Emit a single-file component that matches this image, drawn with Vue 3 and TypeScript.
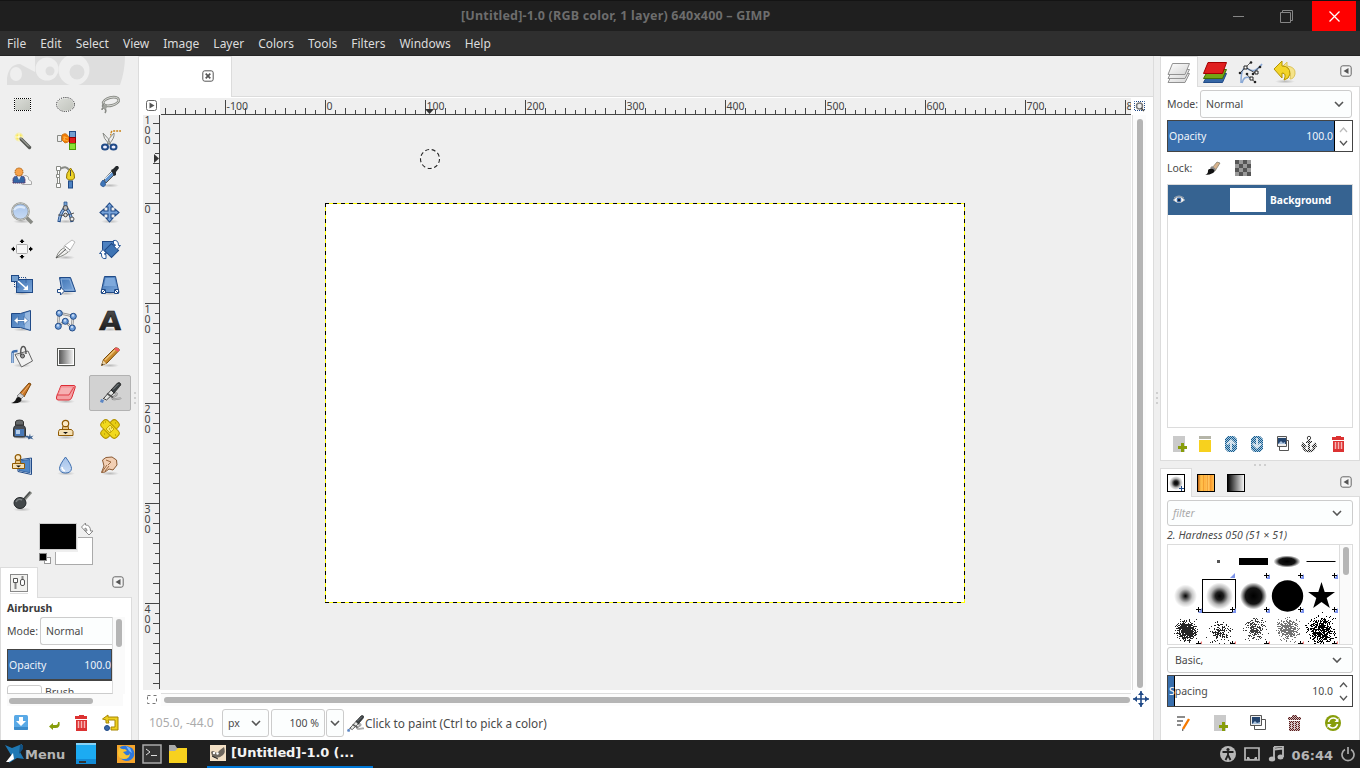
<script setup lang="ts">
const menus = ['File', 'Edit', 'Select', 'View', 'Image', 'Layer', 'Colors', 'Tools', 'Filters', 'Windows', 'Help']

interface Tool { name: string; art: string }

const shadow = '<ellipse cx="12" cy="20.5" rx="9" ry="2" fill="url(#shade)"/>'

const airbrush =
  '<path d="M13 12c5-1 8 1 4 3s-3 4 1 3 4 0 5-1" fill="none" stroke="#8d8d8d" stroke-width="2"/><path d="M13 12c5-1 8 1 4 3s-3 4 1 3 4 0 5-1" fill="none" stroke="#ddd" stroke-width=".6"/>' +
  '<path d="M5.500 17.500L14 8l3 3-8.500 8z" fill="#e4e6e4" stroke="#444" /><path d="M9 12.500l6 4" stroke="#555" stroke-width="1.800"/>' +
  '<path d="M13 9l6.500-7q2-1 3 .5t-1 3L16 12z" fill="#3a4043" stroke="#222" stroke-width=".8"/><path d="M15 8.500L20.500 3" stroke="#8a9093" stroke-width=".9"/>' +
  '<path d="M7 16l-2 2" stroke="#444"/><path d="M2 21l1-3 3 1-1 3z" fill="#5b86c4"/>'

const tools: Tool[] = [
  { name: 'rect-select', art: '<rect x="4.500" y="5.500" width="16" height="12" fill="url(#silver)" stroke="#fff"/><rect x="4.500" y="5.500" width="16" height="12" fill="none" stroke="#000" stroke-dasharray="1 1" stroke-dashoffset=".5"/>' },
  { name: 'ellipse-select', art: '<ellipse cx="11.500" cy="11.500" rx="9" ry="7" fill="url(#silver)" stroke="#fff" stroke-width="1.300"/><ellipse cx="11.500" cy="11.500" rx="9" ry="7" fill="none" stroke="#222" stroke-dasharray="1.200 1"/>' },
  { name: 'lasso', art: '<g fill="none"><ellipse cx="13" cy="8.500" rx="8" ry="4" transform="rotate(-14 13 8.500)" stroke="#888a85" stroke-width="2.600"/><ellipse cx="13" cy="8.500" rx="8" ry="4" transform="rotate(-14 13 8.500)" stroke="#d8dad5" stroke-width=".9"/><path d="M6 11q-3 2 0 4t1 5M9 13q-5 1-5 4" stroke="#888a85" stroke-width="1.600"/></g><circle cx="7" cy="14" r="2" fill="#a0a29d"/>' },
  { name: 'fuzzy-select', art: '<circle cx="9" cy="8" r="5" fill="url(#glow)"/><path d="M10.500 9.500l9 9" stroke="#555753" stroke-width="3.400" stroke-linecap="round"/><path d="M10.500 9l8.500 8.500" stroke="#c2c6bd" stroke-width="1"/><path d="M9 4v8M5 8h8" stroke="#fffbd0"/>' },
  { name: 'color-select', art: '<path d="M3.500 6.500h4v6h-4z" fill="#eee" stroke="#888a85"/><path d="M8 6q4-3 6 1l2 3-2 3-3 1-3-3z" fill="#f57900" stroke="#ce7b1c"/><path d="M9 8l5 1m-5 1l5 2m-3-5l-1 5" stroke="#fcaf3e"/><rect x="15.500" y="2.500" width="6" height="6" fill="#729fcf" stroke="#204a87"/><rect x="15.500" y="8.500" width="6" height="6" fill="#e01b1b" stroke="#8f0000"/><rect x="15.500" y="14.500" width="6" height="6" fill="#8ae234" stroke="#4e9a06"/>' },
  { name: 'scissors', art: '<path d="M13 10q-1-8 2-8h8" fill="none" stroke="#c98012" stroke-width="1.300" stroke-dasharray="2 1"/><path d="M5 4q0 5 6 11l2 1Q11 9 5 4zM16 4q1 5-5 11l-2 1Q10 9 16 4z" fill="#eee" stroke="#888a85"/><g fill="#eef" stroke="#204a87" stroke-width="2"><ellipse cx="7" cy="18" rx="3" ry="2.500"/><ellipse cx="15.500" cy="18" rx="3" ry="2.500"/></g>' },
  { name: 'foreground-select', art: '<path d="M12 19.500v-6q1-3.500 4-3 3.500 1 2.500 4l3 2v3h-9z" fill="#f6f6f6" stroke="#aaa"/><path d="M3 18v-4q1-3 4-3h4q4 0 4 4v3z" fill="#3465a4" stroke="#5c3566" stroke-dasharray="1.500 .6"/><path d="M7 11l2 4 2-4z" fill="#e8eef8"/><circle cx="9" cy="7" r="4" fill="#f7a24a" stroke="#a85a08" stroke-dasharray="1.500 .7"/>' },
  { name: 'paths', art: '<g fill="none" stroke="#888a85"><path d="M4.500 5v13" stroke-width="3"/><path d="M6 4q6-4 9 1" stroke-width="2"/></g><path d="M4.500 5v13" stroke="#fff"/><g fill="#fff" stroke="#888a85"><path d="M2.500 1.500h4v4h-4zM2.500 18.500h4v4h-4zM2.500 9.500h3v3h-3z"/></g><path d="M16.500 3q-5 6-4 10l2 2h4l2-2q1-4-4-10z" fill="#edd42a" stroke="#8f7200"/><path d="M16.500 5v6" stroke="#444"/><rect x="14.500" y="16" width="4" height="7" fill="#4f83c2" stroke="#204a87"/>' },
  { name: 'color-picker', art: shadow + '<path d="M6 15l8-9 3 3-9 9z" fill="#5f93cf" stroke="#555753"/><path d="M7 14l8-8" stroke="#d7e5f5"/><path d="M13 5l2-1 3-3h2l1 2-3 4v3l-2 1z" fill="#24282b"/><path d="M5 15q-4 4-1.500 6t4-1Q8 17 5 15z" fill="#3f76b8" stroke="#204a87" stroke-width=".7"/>' },
  { name: 'zoom', art: shadow + '<path d="M16 16l6 6" stroke="#888a85" stroke-width="3.500"/><circle cx="10.500" cy="10.500" r="8.300" fill="url(#lens)" stroke="#8b8d89" stroke-width="2"/><circle cx="10.500" cy="10.500" r="8.300" fill="none" stroke="#d3d5d1" stroke-width=".8"/><path d="M4 9q3-5 11-2" stroke="#dce9fa" stroke-width="2" fill="none"/>' },
  { name: 'measure', art: shadow + '<g fill="none"><path d="M10 8q-4 5-5 13M13 8q4 5 5 13" stroke="#204a87" stroke-width="3.200"/><path d="M10 8q-4 5-5 12M13 8q4 5 5 12" stroke="#8db2df" stroke-width="1.500"/><path d="M4 14q8 2 16-2" stroke="#555"/></g><path d="M10 1h3v4h-3z" fill="#729fcf" stroke="#204a87" stroke-width=".7"/><circle cx="11.500" cy="7" r="2.400" fill="#bbb" stroke="#444"/><circle cx="11.500" cy="14" r="1.800" fill="#ddd" stroke="#444"/><circle cx="18" cy="18" r="2" fill="#eee" stroke="#555"/>' },
  { name: 'move', art: shadow + '<path d="M11.500 2l3.500 4h-2v4h4V8l4 3.500-4 3.500v-2h-4v4h2l-3.500 4L8 17h2v-4H6v2l-4-3.500L6 8v2h4V6H8z" fill="#78a4db" stroke="#204a87" stroke-width="1.100"/>' },
  { name: 'align', art: '<rect x="6.500" y="7.500" width="11" height="9" rx="1" fill="#f5f5f5" stroke="#a8a8a8"/><path d="M12 2l2.500 3H13v1h-2V5H9.500zM12 22l2.500-3H13v-1h-2v1H9.500zM1 12l3-2.500V11h1v2H4v1.500zM23 12l-3-2.500V11h-1v2h1v1.500z" fill="#000"/>' },
  { name: 'crop', art: shadow + '<path d="M2 21q3-9 10-11l3 4q-3 4-13 7z" fill="#f1f1ef" stroke="#888a85"/><path d="M10 9l8-6 3 2-6 10-4-2z" fill="#fff" stroke="#bbb"/><path d="M2 21l10-9" stroke="#555"/><path d="M11 9l5 4" stroke="#888"/>' },
  { name: 'rotate', art: '<rect x="4.500" y="4.500" width="11" height="10" fill="#4d81c0" stroke="#204a87"/><rect x="8.500" y="8.500" width="10" height="10" transform="rotate(45 13.500 13.500)" fill="#3e74b4" stroke="#204a87"/><g fill="#fff" stroke="#2b5a9a" stroke-width="1"><path d="M15.500 3.500q5-1 5 5h2l-3.500 4-3.500-4h2q0-2-2-1z"/><path d="M8 21.500q-5 1-4.500-5h-2L5 12.500l3.500 4h-2q0 2 1.500 1z"/></g>' },
  { name: 'scale', art: shadow + '<rect x="6.500" y="6.500" width="16" height="13" fill="url(#blue)" stroke="#204a87"/><rect x="1.500" y="2.500" width="7" height="6" fill="#729fcf" stroke="#204a87"/><path d="M4.500 9v5h5M9 4.500h7V10" fill="none" stroke="#204a87" stroke-dasharray="1 1"/><path d="M8 8l9 8" stroke="#fff" stroke-width="1.600"/><path d="M13 17h5v-5z" fill="#fff"/>' },
  { name: 'shear', art: shadow + '<path d="M5.500 4.500h11l5 14H8z" fill="url(#blue)" stroke="#204a87"/><path d="M7 6h8.500l4 11H9z" fill="none" stroke="#8db2df"/><path d="M3.500 16.500h3V14l4 4-4 4v-2.500h-3z" fill="#fff" stroke="#204a87"/>' },
  { name: 'perspective', art: shadow + '<path d="M6.500 3.500h11l3.500 16H3z" fill="url(#blue)" stroke="#204a87"/><path d="M7.500 5h9l1.500 8H6z" fill="#7ea9dc"/><g fill="#fff" stroke="#204a87"><path d="M3.500 16.500h4v4h-4zM16.500 16.500h4v4h-4z"/></g><path d="M4 20l3-3M20 20l-3-3" stroke="#204a87"/>' },
  { name: 'flip', art: shadow + '<path d="M1.500 4.500h9l10-3v20l-10-3h-9z" fill="url(#blue)" stroke="#204a87"/><path d="M15 4l5-1.500v18L15 19z" fill="#bdd3ee" opacity=".6"/><path d="M4 11.500l4-4v3h6v-3l4 4-4 4v-3H8v3z" fill="#fff" stroke="#3465a4" stroke-width=".7"/>' },
  { name: 'cage', art: '<path d="M5 4l14 3-1 12-7-7-7 5z" fill="none" stroke="#888" stroke-width="2.400"/><path d="M5 4l14 3-1 12-7-7-7 5z" fill="none" stroke="#ddd"/><g fill="#6c9cd8" stroke="#204a87"><circle cx="5.300" cy="4.300" r="3"/><circle cx="19.300" cy="7.300" r="3"/><circle cx="11.300" cy="12.300" r="3"/><circle cx="4.300" cy="17.300" r="3"/><circle cx="18.300" cy="19" r="3"/></g><g fill="#c5daf5"><circle cx="5" cy="3.500" r="1.200"/><circle cx="19" cy="6.500" r="1.200"/><circle cx="11" cy="11.500" r="1.200"/><circle cx="4" cy="16.500" r="1.200"/><circle cx="18" cy="18" r="1.200"/></g>' },
  { name: 'text', art: shadow + '<text x="1" y="21" font-family="DejaVu Sans" font-weight="bold" font-size="26" textLength="22" lengthAdjust="spacingAndGlyphs" fill="url(#ink)" stroke="#111" stroke-width=".5" transform="translate(1 0) skewX(-3)">A</text>' },
  { name: 'bucket', art: shadow + '<path d="M2.500 18V8q0-2 5-2" fill="none" stroke="#3f6fae" stroke-width="2.400"/><path d="M2.500 18V8" stroke="#9dbde5"/><path d="M5 9.500l13-3.500 4.500 10-11 6z" fill="#f1f1f1" stroke="#666"/><path d="M7 10.500l10-2.500" stroke="#ccc"/><path d="M11 11q-1-9 2-9.500T16 9" fill="none" stroke="#555" stroke-width="1.400"/><circle cx="12.500" cy="11" r="2" fill="#999" stroke="#444"/>' },
  { name: 'gradient', art: shadow + '<rect x="3.500" y="3.500" width="17" height="17" fill="#fff" stroke="#555753"/><rect x="5" y="5" width="14" height="14" fill="url(#gray)"/>' },
  { name: 'pencil', art: shadow + '<path d="M3.500 20.500l2-6L17 3q3-1 4.500 2L9 18z" fill="#c98b2c" stroke="#7a4a08"/><path d="M7 15L17 5" stroke="#edc37b" stroke-width="1.500"/><path d="M16 4l1-1q3-1 4.500 2L20 7z" fill="#ef5a62"/><path d="M3.500 20.500l1.700-5 3 3z" fill="#e9d2a6"/><path d="M3.500 20.500l1-2 1 1z" fill="#222"/>' },
  { name: 'paintbrush', art: shadow + '<path d="M10 12L19 2l2 1-7 13z" fill="#c97627" stroke="#7d4506"/><path d="M12 13l7-9" stroke="#f1b06a"/><path d="M7 15l3-3 4 3-3 3z" fill="#d3d3d3" stroke="#888"/><path d="M1 22q4-1 5-4t4-1.500q3 2.500 0 4.500t-9 1z" fill="#151515"/>' },
  { name: 'eraser', art: shadow + '<path d="M7 4.500h13q2 0 1 2.500l-3 9q-1 3-3 3H4q-2 0-1.500-3z" fill="#f4a0a3" stroke="#dd2c35"/><path d="M7 6h12l-4 8H4z" fill="#f6b0b2" stroke="#f07b80" stroke-width=".6"/><path d="M2.500 14H15l5-8" fill="none" stroke="#e04a52"/>' },
  { name: 'airbrush', art: airbrush },
  { name: 'ink', art: shadow + '<path d="M3.500 19v-7q0-3 3-4h6q3 1 3 4v7q0 1-2 1h-8q-2 0-2-1z" fill="#4a4f55" stroke="#2c3338"/><rect x="5" y="12" width="9" height="7" fill="#4878b6"/><path d="M6 13h4v4H6z" fill="#b7cfea"/><path d="M5.500 8V5q0-2 4-2t4 2v3z" fill="#65696a" stroke="#333"/><path d="M14 20l3-1.500 2 1 1-3 .6 3 3-1-2 2 2 2-3-1-2 1-1-2z" fill="#375d8f"/>' },
  { name: 'clone', art: shadow + '<path d="M9 9h5l1 5H8z" fill="#e8c88c" stroke="#8f5902"/><circle cx="11.500" cy="6.500" r="3.200" fill="#fbeac8" stroke="#8f5902" stroke-width="1.200"/><path d="M5.500 12.500h12l1.500 2v4H4.500v-4z" fill="#f3dfb4" stroke="#8f5902"/><path d="M9 15h5l-2.500 2z" fill="#111"/>' },
  { name: 'heal', art: '<g stroke="#b39300"><rect x="1.500" y="7.500" width="21" height="9" rx="3.500" transform="rotate(-45 12 12)" fill="#e8ce14"/><rect x="1.500" y="7.500" width="21" height="9" rx="3.500" transform="rotate(45 12 12)" fill="#f1d91d"/></g><path d="M8 12l4-4 4 4-4 4z" fill="#f8e96a" stroke="#c8a800"/><path d="M5 6h1M7 5h1M17 6h1M6 17h1M17 18h1M11 12h1m1-1h1m-2 3h1" stroke="#a28500"/>' },
  { name: 'perspective-clone', art: '<path d="M7.500 7l14-2v16.500L8 18.500z" fill="#e8f0fa" stroke="#204a87"/><path d="M9 8l11-1.500v13.200L9 17.500z" fill="#4f86c6" stroke="#3465a4"/><path d="M6 7h4l1 4H5z" fill="#e8c88c" stroke="#8f5902"/><circle cx="8" cy="4.500" r="2.800" fill="#fbeac8" stroke="#8f5902" stroke-width="1.200"/><path d="M2.500 10.500h12v5h-12z" fill="#f3dfb4" stroke="#8f5902"/><path d="M6 12.500h5l-2.500 2z" fill="#111"/>' },
  { name: 'blur', art: shadow + '<path d="M11.500 4q-6 8-6 11.500Q6 20 11.500 20t6-4.500Q17.500 12 11.500 4z" fill="url(#lens)" stroke="#3f6fae"/><path d="M8 14q0 3 3 4" stroke="#fff" stroke-width="1.500" fill="none"/>' },
  { name: 'smudge', art: shadow + '<path d="M3.500 19.500L6 13l-1.500-6L8 4.500 14 4l4.500 3 .5 5-4 5-4-1-4 3z" fill="#f2cfb3" stroke="#8b5a33"/><path d="M4 19l5-7M7 18l4-5M8 7l5 2-3 3" stroke="#9c6a42" fill="none"/>' },
  { name: 'dodge', art: shadow + '<path d="M13 12l8-9" stroke="#888a85" stroke-width="3"/><path d="M12 12l8-9" stroke="#4b4f4f" stroke-width="1.600"/><ellipse cx="10" cy="14" rx="6" ry="5.500" fill="#43484a" stroke="#24282b"/><path d="M6 13q2-4 6-2" stroke="#7b8082" stroke-width="1.500" fill="none"/>' },
]

const hTicks = Array.from({ length: 97 }, (_, i) => (i - 16) * 10)
const vTicks = Array.from({ length: 57 }, (_, i) => (i - 8) * 10)
const hLabels = [-100, 0, 100, 200, 300, 400, 500, 600, 700, 800]
const vLabels = [
  { at: 9, text: '100' },
  { at: 98, text: '0' },
  { at: 198, text: '100' },
  { at: 298, text: '200' },
  { at: 398, text: '300' },
  { at: 498, text: '400' },
]

const tickSize = (v: number, big: number): number => (v % 100 === 0 ? big : v % 20 === 0 ? 6 : 4)

function splatter(seed: number, cx: number, cy: number, spread: number, count: number): string {
  let s = seed
  const rnd = (): number => {
    s = (s + 0x6d2b79f5) | 0
    let t = Math.imul(s ^ (s >>> 15), 1 | s)
    t = (t + Math.imul(t ^ (t >>> 7), 61 | t)) ^ t
    return ((t ^ (t >>> 14)) >>> 0) / 4294967296
  }
  let d = ''
  for (let i = 0; i < count; i++) {
    const x = Math.round(cx + (rnd() + rnd() + rnd() - 1.5) * spread)
    const y = Math.round(cy + (rnd() + rnd() + rnd() - 1.5) * spread)
    d += `M${x} ${y}h1v1h-1z`
  }
  return d
}
const splats = [
  { d: splatter(17, 18, 85, 9, 560), o: 0.85 },
  { d: splatter(91, 52, 87, 10, 170), o: 0.85 },
  { d: splatter(233, 86, 84, 10, 220), o: 0.75 },
  { d: splatter(477, 119, 84, 9.5, 420), o: 0.55 },
  { d: splatter(919, 153, 85, 12.5, 520), o: 1 },
]

const trash = '<path d="M4 3h4V1h5v2h4v3H4zM5 7h11v10H5z"/>'

const layerActions = [
  { name: 'new', art: '<path d="M4 1h12v16H4z" fill="#cacaca"/><path d="M12 8h3v3h3v3h-3v3h-3v-3H9v-3h3z" fill="#879d0a"/>' },
  { name: 'group', art: '<path d="M4 1h12v3H4z" fill="#b5b5a8"/><path d="M4 5h12v12H4z" fill="#f7d11e"/>' },
  { name: 'raise', art: '<path d="M7 1h6l3 3v10l-3 3H7l-3-3V4z" fill="url(#hatch)"/><path d="M10 4l5 5-2 1-2-2v7H9V8l-2 2-2-1z" fill="#fff" opacity=".75"/>' },
  { name: 'lower', art: '<path d="M7 1h6l3 3v10l-3 3H7l-3-3V4z" fill="url(#hatch)"/><path d="M10 14l5-5-2-1-2 2V3H9v7L7 8 5 9z" fill="#fff" opacity=".75"/>' },
  { name: 'duplicate', art: '<path d="M6.500 5.500h9v10h-9z" fill="#fff" stroke="#555"/><path d="M4.500 1.500h9v10h-9z" fill="#eee" stroke="#555"/><path d="M5 3h8v6H5z" fill="#24456f"/><path d="M5 9l3-3 2 2 2-1v2z" fill="#a9c2dd"/>' },
  { name: 'anchor', art: '<circle cx="10" cy="3" r="1.700" fill="none" stroke="#444"/><path d="M10 4v12M7 7h6M4 10q1 7 6 6 5 1 6-6M3 12l1-3 3 3M17 12l-1-3-3 3" fill="none" stroke="url(#dots)" stroke-width="2.200"/>' },
]
const brushActions = [
  { name: 'edit', art: '<path d="M3 3h8M3 7h6M3 11h4" stroke="#666" stroke-width="1.600"/><path d="M9 15l6-10" stroke="#f57900" stroke-width="2.400"/><path d="M8 17l2-1-2-1z" fill="#444"/>' },
  { name: 'new', art: '<path d="M3 1h12v16H3z" fill="#cacaca"/><path d="M11 8h3v3h3v3h-3v3h-3v-3H8v-3h3z" fill="#879d0a"/>' },
  { name: 'duplicate', art: '<path d="M6.500 5.500h11v10h-11z" fill="#fff" stroke="#555"/><path d="M2.500 1.500h11v10h-11z" fill="#eee" stroke="#555"/><path d="M4 3h8v7H4z" fill="#24456f"/><path d="M4 10l3-3 2 2 3-1v2z" fill="#a9c2dd"/>' },
  { name: 'delete', art: '<g fill="url(#redhatch)">' + trash + '</g><path d="M7.500 8v7M10.500 8v7M13.500 8v7" stroke="#d8cccc"/>' },
  { name: 'refresh', art: '<circle cx="10" cy="9" r="8" fill="#879d0a"/><path d="M5.500 8q1-4 5-4 3 0 4 3M14.500 10q-1 4-5 4-3 0-4-3" stroke="#fff" stroke-width="1.600" fill="none"/><path d="M15.500 4v4h-4zM4.500 14v-4h4z" fill="#fff"/>' },
]
</script>

<template>
  <div class="desktop">
    <svg class="defs" width="0" height="0">
      <defs>
        <linearGradient id="silver" x1="0" y1="0" x2="1" y2="1"><stop offset="0" stop-color="#dcded9" /><stop offset="1" stop-color="#c0c3bc" /></linearGradient>
        <linearGradient id="sheet" x1="0" y1="0" x2="1" y2="1"><stop offset="0" stop-color="#fff" /><stop offset="1" stop-color="#d4d4d4" /></linearGradient>
        <linearGradient id="blue" x1="0" y1="0" x2="1" y2="1"><stop offset="0" stop-color="#3c72b3" /><stop offset="1" stop-color="#7fa9dc" /></linearGradient>
        <linearGradient id="lens" x1="0" y1="0" x2="0" y2="1"><stop offset="0" stop-color="#a3c1ea" /><stop offset="1" stop-color="#c9dcf5" /></linearGradient>
        <linearGradient id="gray"><stop offset="0" stop-color="#555" /><stop offset="1" stop-color="#eee" /></linearGradient>
        <linearGradient id="bw"><stop offset="0" stop-color="#000" /><stop offset="1" stop-color="#fff" /></linearGradient>
        <linearGradient id="ink" x1="0" y1="0" x2="0" y2="1"><stop offset="0" stop-color="#555" /><stop offset="1" stop-color="#111" /></linearGradient>
        <linearGradient id="wood"><stop offset="0" stop-color="#b8540c" /><stop offset=".2" stop-color="#ffc04a" /><stop offset=".5" stop-color="#ffb545" /><stop offset=".6" stop-color="#ffd070" /><stop offset=".8" stop-color="#ff9f2c" /><stop offset="1" stop-color="#ffc860" /></linearGradient>
        <radialGradient id="shade"><stop offset="0" stop-color="#000" stop-opacity=".22" /><stop offset="1" stop-color="#000" stop-opacity="0" /></radialGradient>
        <radialGradient id="glow"><stop offset="0" stop-color="#fff" /><stop offset=".4" stop-color="#fce94f" /><stop offset="1" stop-color="#fce94f" stop-opacity="0" /></radialGradient>
        <radialGradient id="soft"><stop offset="0" stop-color="#000" /><stop offset=".3" stop-color="#000" stop-opacity=".6" /><stop offset=".6" stop-color="#000" stop-opacity=".22" /><stop offset="1" stop-color="#000" stop-opacity="0" /></radialGradient>
        <radialGradient id="mid"><stop offset="0" stop-color="#000" /><stop offset=".3" stop-color="#000" stop-opacity=".88" /><stop offset=".65" stop-color="#000" stop-opacity=".3" /><stop offset="1" stop-color="#000" stop-opacity="0" /></radialGradient>
        <radialGradient id="hard"><stop offset="0" stop-color="#000" /><stop offset=".6" stop-color="#000" stop-opacity=".92" /><stop offset="1" stop-color="#000" stop-opacity="0" /></radialGradient>
        <pattern id="hatch" width="2" height="2" patternUnits="userSpaceOnUse"><path d="M0 0h2v2H0z" fill="#a9cbe2" /><path d="M0 0h1v1H0zM1 1h1v1H1z" fill="#175a8c" /></pattern>
        <pattern id="redhatch" width="2" height="2" patternUnits="userSpaceOnUse"><path d="M0 0h2v2H0z" fill="#cdb9b9" /><path d="M0 0h1v1H0zM1 1h1v1H1z" fill="#5a1c1c" /></pattern>
        <pattern id="dots" width="2" height="2" patternUnits="userSpaceOnUse"><path d="M0 0h2v2H0z" fill="#ddd" /><path d="M0 0h1v1H0zM1 1h1v1H1z" fill="#222" /></pattern>
      </defs>
    </svg>

    <header class="titlebar">
      <div class="title">[Untitled]-1.0 (RGB color, 1 layer) 640x400 – GIMP</div>
      <div class="winbtns">
        <svg width="48" height="30"><path d="M19 15.500h11" stroke="#858585" /></svg>
        <svg width="48" height="30"><path d="M18.500 11.500h10v10h-10zM20.500 11.500v-2h10v10h-2" fill="none" stroke="#858585" /></svg>
        <svg class="close" width="44" height="30"><path d="M17.500 10.500l10 10M27.500 10.500l-10 10" stroke="#fff" stroke-width="1.300" /></svg>
      </div>
    </header>
    <nav class="menubar"><span v-for="m in menus" :key="m">{{ m }}</span></nav>

    <main class="work">
      <aside class="left">
        <svg class="wilber" width="138" height="31">
          <path d="M7 29V22Q9 8 20 8l15 8V0h90q0 15-5 29H7z" fill="#dedede" />
          <circle cx="47" cy="13" r="11.500" fill="#efefef" /><circle cx="74" cy="14" r="15.500" fill="#efefef" />
          <ellipse cx="16" cy="18" rx="6" ry="7" fill="#efefef" /><circle cx="50" cy="15" r="4.500" fill="#dedede" /><circle cx="77" cy="16" r="7.500" fill="#dedede" />
        </svg>
        <div class="tools">
          <div v-for="t in tools" :key="t.name" class="tool" :class="{ on: t.name === 'airbrush' }">
            <svg width="24" height="24" viewBox="0 0 24 24" v-html="t.art" />
          </div>
        </div>
        <svg class="swatches" width="132" height="48">
          <rect x="55.500" y="18.500" width="37" height="27" fill="#fff" stroke="#aaa" /><rect x="38" y="3" width="40" height="30" fill="#efefef" />
          <path d="M56 33h22v-14h14v26H56z" fill="#fff" />
          <rect x="38" y="3" width="39" height="29" fill="#efefef" />
          <rect x="39.500" y="4.500" width="37" height="26" fill="#000" stroke="#ccc" />
          <rect x="44.500" y="38.500" width="6" height="6" fill="#fff" stroke="#999" /><rect x="39.500" y="34.500" width="7" height="7" fill="#000" stroke="#888" />
          <path d="M81.500 8l4-4v2q5 0 5 6h2.500l-4 4-4-4h2q0-3-2-3v3z" fill="#fff" stroke="#888" />
        </svg>
        <div class="tabrow ltabs">
          <div class="tab first"><svg width="20" height="22"><rect x="1.500" y="1.500" width="17" height="17" fill="#f2f2f0" stroke="#888" /><path d="M6.500 9v7M13.500 3v6" stroke="#888" stroke-width="2" /><path d="M4.500 5.500h4v4h-4z" fill="#fff" stroke="#555" /><rect x="11.500" y="6.500" width="4" height="6" rx="1.500" fill="#fff" stroke="#555" /><path d="M1 20.500h18" stroke="#ddd" /></svg></div>
          <svg class="dockbtn" width="12" height="12"><rect x=".8" y=".8" width="10.400" height="10.400" rx="2" fill="#f4f4f4" stroke="#666" /><path d="M8.500 3v6l-5-3z" fill="#555" /></svg>
        </div>
        <section class="options">
          <div class="opt-title">Airbrush</div>
          <div class="opt-body">
            <div class="opt-view">
              <div class="optmode"><span>Mode:</span><div class="cut">Normal</div></div>
              <div class="fill"><span>Opacity</span><span>100.0</span></div>
              <div class="brushrow"><i></i><span>Brush</span></div>
            </div>
            <div class="vtrack"><i></i></div>
          </div>
          <div class="htrack"><i></i></div>
          <div class="opt-btns">
            <svg width="16" height="18"><rect x="1" y="1" width="14" height="15" rx="1.500" fill="#59a9e6" /><path d="M1 13h14v2q0 1-1 1H2q-1 0-1-1z" fill="#3c8bca" /><path d="M6 3h4v4h3l-5 5-5-5h3z" fill="#fff" /></svg>
            <svg class="reset" width="16" height="18"><path d="M3 12.500L7 9v2h3q2 0 2-3h1.500q1 6-4 6H7v2z" fill="#879d0a" /></svg>
            <svg class="trash" width="16" height="18"><path d="M2 2h4V1h5v1h3v3H2zM3 6h11v11H3z" fill="#dc3232" /><path d="M5.500 7v7M8.500 7v7M11.500 7v7" stroke="#f7b5b5" stroke-width="1.500" /></svg>
            <svg class="undo" width="18" height="18"><path d="M7 9H4V6L.500 5 6 1v2h10v13H9v-3h4V6H6z" fill="#edcf20" stroke="#a78600" /><circle cx="5" cy="14" r="2.500" fill="#3a68a8" stroke="#204a87" /></svg>
          </div>
        </section>
        <div class="grip"><i></i><i></i><i></i></div>
      </aside>

      <section class="center">
        <div class="imgtabs">
          <div class="imgtab"><svg width="12" height="12"><rect x=".8" y=".8" width="10.400" height="10.400" rx="2" fill="#fff" stroke="#555" stroke-width="1" /><path d="M3.700 3.700l4.600 4.600M8.300 3.700l-4.600 4.600" stroke="#555" stroke-width="1.700" /></svg></div>
          <div class="tabfill"></div>
        </div>
        <div class="editor">
          <div class="hrow">
            <svg class="quick" width="21" height="19"><rect x="7.500" y="3.500" width="10" height="10" rx="2" fill="#fff" stroke="#666" /><path d="M10.500 5.500v6l5-3z" fill="#555" /></svg>
            <svg class="hruler" width="971" height="18">
              <g v-for="v in hTicks" :key="v"><path :d="`M${v + 165.5} 16v${-tickSize(v, 14)}`" stroke="#444" /></g>
              <text v-for="v in hLabels" :key="'l' + v" :x="v + 166.500" y="11.500">{{ v }}</text>
              <path d="M1 16.500h970" stroke="#444" /><path d="M265 11h9l-4.500 5z" fill="#333" />
            </svg>
            <svg class="navq" width="22" height="20"><rect x="3.500" y="4.500" width="10" height="9" fill="none" stroke="#204a87" stroke-dasharray="1 1" stroke-dashoffset=".5" /><circle cx="8.500" cy="9" r="3" fill="#eee" stroke="#777" stroke-width="1.500" /><path d="M10 11l3 3" stroke="#444" stroke-width="1.500" /></svg>
          </div>
          <div class="crow">
            <svg class="vruler" width="18" height="575">
              <g v-for="v in vTicks" :key="v"><path :d="`M16 ${v + 88.5}h${-tickSize(v, 14)}`" stroke="#444" /></g>
              <template v-for="l in vLabels" :key="'v' + l.at"><text v-for="(c, i) in l.text.split('')" :key="i" x="1.500" :y="l.at + i * 10">{{ c }}</text></template>
              <path d="M16.500 0v574" stroke="#444" /><path d="M11 39v9l5-4.500z" fill="#333" />
            </svg>
            <svg class="canvas" width="970" height="575">
              <rect x="164" y="88" width="640" height="400" fill="#fff" />
              <rect x="164.500" y="88.500" width="639" height="399" fill="none" stroke="#ff0" />
              <path d="M164 88.500h640M803.500 88v400M164.500 88v400M164 487.500h640" fill="none" stroke="#000" stroke-dasharray="4 4" />
              <circle cx="269" cy="44" r="9.500" fill="none" stroke="#fff" /><circle cx="269" cy="44" r="9.500" fill="none" stroke="#222" stroke-width="1.100" stroke-dasharray="4 2.600" />
            </svg>
            <div class="vscroll"><i></i></div>
          </div>
          <div class="srow">
            <svg width="22" height="14"><path d="M8.500 3.500h9v8h-9z" fill="none" stroke="#777" stroke-dasharray="3 3" /></svg>
            <div class="hscroll"><i></i></div>
            <svg class="nav" width="18" height="18" viewBox="0 0 18 18"><path d="M9 1v16M1 9h16" stroke="#204a87" stroke-width="1.600" /><path d="M9 1.500l3 3.500H6zM9 16.500l3-3.500H6zM1.500 9L5 6v6zM16.500 9L13 6v6z" fill="#204a87" /></svg>
          </div>
          <div class="status">
            <span class="coords">105.0, -44.0</span>
            <div class="combo px"><span>px</span><svg width="10" height="6"><path d="M1 1l4 4 4-4" /></svg></div>
            <div class="combo pct"><span>100 %</span></div>
            <div class="combo arr"><svg width="10" height="6"><path d="M1 1l4 4 4-4" /></svg></div>
            <svg width="17" height="17" viewBox="2 1 21 21" v-html="airbrush" />
            <span class="hint">Click to paint (Ctrl to pick a color)</span>
          </div>
        </div>
      </section>

      <aside class="right">
        <div class="grip rg"><i></i><i></i><i></i></div>
        <div class="docks">
          <div class="tabrow rtabs">
            <div class="tab first"><svg width="26" height="26"><g fill="url(#sheet)" stroke="#929292"><path d="M2 23.500h17l4.500-9H6.500z" /><path d="M2 19.500h17l4.500-9H6.500z" /><path d="M2 15.500h17l4.500-11H6.500z" /></g></svg></div>
            <svg width="36" height="26"><path d="M5.500 24.500h19l4-9h-18z" fill="#3465a4" stroke="#204a87" /><path d="M5.500 20.500h19l4-9h-18z" fill="#73a516" stroke="#3e6f04" /><path d="M5.500 15.500l4.500-11h18.500l-4 11z" fill="#e02020" stroke="#a40000" /></svg>
            <svg width="36" height="26"><g fill="none"><path d="M7 25Q7 6 14 11t14-5M8 25q2-8 8-5" stroke="#8aa9d6" stroke-width="1.600" /><path d="M6 15L17 4M12 16l9 8M19 16l7-8M11 9l10 6" stroke="#333" stroke-width=".8" /></g><g fill="#222"><circle cx="6" cy="15" r="1.300" /><circle cx="17" cy="4.500" r="1.300" /><circle cx="19" cy="16" r="1.300" /><circle cx="13" cy="16" r="1.300" /><circle cx="21" cy="24" r="1.300" /><circle cx="26" cy="9" r="1.300" /></g><g fill="#fff" stroke="#222"><path d="M10 8h3v3h-3zM16 19h3v3h-3zM21 13h3v3h-3z" /></g></svg>
            <svg width="36" height="26"><ellipse cx="15" cy="23.500" rx="10" ry="2" fill="url(#shade)" /><path d="M10 11l7-7v4q9 1 8 8-1 5-5 5 2-6-3-6v4z" fill="#f5e389" stroke="#dcc45a" /><path d="M4 11l8-8v5q8 0 8 8-1 5-6 6 3-7-2-7v5z" fill="#f3d52a" stroke="#b39300" /></svg>
            <svg class="dockbtn" width="12" height="12"><rect x=".8" y=".8" width="10.400" height="10.400" rx="2" fill="#f4f4f4" stroke="#666" /><path d="M8.500 3v6l-5-3z" fill="#555" /></svg>
          </div>
          <section class="layers">
            <div class="moderow"><span>Mode:</span><div class="combo"><span>Normal</span><svg width="10" height="6"><path d="M1 1l4 4 4-4" /></svg></div></div>
            <div class="spin"><div class="full"><span>Opacity</span><span>100.0</span></div><div class="steps"><svg class="dim" width="9" height="6"><path d="M1 5l3.500-4L8 5" /></svg><svg width="9" height="6"><path d="M1 1l3.500 4L8 1" /></svg></div></div>
            <div class="lock"><span>Lock:</span>
              <svg width="17" height="16"><path d="M8 8l5-6 3 1-5 8z" fill="#d9b28c" stroke="#776" stroke-width=".7" /><path d="M6 8l2-2 4 3-2 3z" fill="#888" /><path d="M1 15q3-1 3-4t5-2q3 2 0 4t-8 2z" fill="#111" /></svg>
              <svg width="16" height="16"><path d="M0 0h16v16H0z" fill="#999" /><path d="M0 0h4v4H0zM8 0h4v4H8zM4 4h4v4H4zM12 4h4v4h-4zM0 8h4v4H0zM8 8h4v4H8zM4 12h4v4H4zM12 12h4v4h-4z" fill="#555" /></svg>
            </div>
            <div class="layerlist">
              <div class="layer"><svg width="12" height="10"><path d="M.5 5Q6-1 11.500 5 6 10 .5 5z" fill="#fff" stroke="#ccc" /><circle cx="6" cy="5" r="2.400" fill="#3465a4" /><circle cx="6" cy="5" r="1" fill="#111" /><path d="M1 3q5-4 10 0" stroke="#bbb" fill="none" stroke-width=".8" /></svg><i></i><b>Background</b></div>
            </div>
            <div class="actions">
              <svg v-for="a in layerActions" :key="a.name" width="20" height="18" v-html="a.art" />
              <svg width="20" height="18"><path d="M4 2h4V1h5v1h3v3H4zM5 6h11v11H5z" fill="#dc3232" /><path d="M7.500 7v7M10.500 7v7M13.500 7v7" stroke="#f7b5b5" stroke-width="1.500" /></svg>
            </div>
          </section>
          <div class="hgrip"><i></i><i></i><i></i></div>
          <div class="tabrow btabs">
            <div class="tab first"><svg width="18" height="18"><rect x=".5" y=".5" width="17" height="17" fill="#fff" stroke="#000" /><circle cx="9" cy="9" r="7" fill="url(#mid)" /><path d="M14.500 12v5M12 14.500h5" stroke="#204a87" /></svg></div>
            <svg width="18" height="18"><rect x=".5" y=".5" width="17" height="17" fill="url(#wood)" stroke="#000" /><path d="M6.500 1v16M10.500 1v16M13.500 1v16" stroke="#ee9428" stroke-width=".7" /></svg>
            <svg width="18" height="18"><rect x=".5" y=".5" width="17" height="17" fill="url(#bw)" stroke="#000" /></svg>
            <svg class="dockbtn" width="12" height="12"><rect x=".8" y=".8" width="10.400" height="10.400" rx="2" fill="#f4f4f4" stroke="#666" /><path d="M8.500 3v6l-5-3z" fill="#555" /></svg>
          </div>
          <section class="brushes">
            <div class="combo filter"><em>filter</em><svg width="10" height="6"><path d="M1 1l4 4 4-4" /></svg></div>
            <div class="bname">2. Hardness 050 (51 × 51)</div>
            <div class="blist">
              <svg width="171" height="99">
                <rect x="49" y="15" width="3" height="3" fill="#555" /><rect x="71" y="13" width="29" height="7" fill="#000" />
                <ellipse cx="119" cy="16.500" rx="13.500" ry="6" fill="url(#hard)" /><path d="M138.500 16.500h29" stroke="#000" />
                <circle cx="17.500" cy="51" r="11.500" fill="url(#soft)" /><circle cx="51.500" cy="51" r="13.500" fill="url(#mid)" />
                <circle cx="85.500" cy="51" r="13.500" fill="url(#hard)" /><circle cx="119.500" cy="51" r="15.700" fill="#000" />
                <path d="M153.500 37l3.200 10h10.300l-8.300 6 3.100 10-8.300-6-8.300 6 3.100-10-8.200-6h10.200z" fill="#000" />
                <path v-for="s in splats" :key="s.d" :d="s.d" :fill-opacity="s.o" />
                <rect x="34.500" y="34.500" width="33" height="33" fill="none" stroke="#000" />
                <path d="M67 33v-5l-5 5z" fill="#7b93e8" />
                <g v-for="n in 5" :key="n">
                  <path :d="`M${n * 34 - 4} 68h4v-5z`" fill="#7b93f0" /><path :d="`M${n * 34 - 3.5} 62v5m-2.500-2.500h5`" stroke="#000" />
                  <g v-if="n > 2"><path :d="`M${n * 34 - 4} 34h4v-5z`" fill="#7b93f0" /><path :d="`M${n * 34 - 3.5} 28v5m-2.500-2.500h5`" stroke="#000" /></g>
                  <path :d="`M${n * 34 - 3} 99h3v-3z`" fill="#f07b7b" /><path :d="`M${n * 34 - 3.5} 96v3m-2.500-.5h5`" stroke="#000" />
                </g>
              </svg>
              <div class="vtrack bt"><i></i></div>
            </div>
            <div class="combo tags"><span>Basic,</span><svg width="10" height="6"><path d="M1 1l4 4 4-4" /></svg></div>
            <div class="spin spacing"><div class="part"><i></i><span><u>S</u>pacing</span><span>10.0</span></div><div class="steps"><svg width="9" height="6"><path d="M1 5l3.500-4L8 5" /></svg><svg width="9" height="6"><path d="M1 1l3.500 4L8 1" /></svg></div></div>
            <div class="bactions"><svg v-for="a in brushActions" :key="a.name" width="20" height="18" v-html="a.art" /></div>
          </section>
        </div>
      </aside>
    </main>

    <footer class="taskbar">
      <svg width="19" height="22"><path d="M0 2l7 3 10-4-2 8 4 7-7-1-8 5 2-8z" fill="#1e78b4" /><path d="M15 2h3v4l-4 5z" fill="#115080" /><path d="M1 19l7-9 1 6-5 3z" fill="#fff" /></svg>
      <span class="menu">Menu</span>
      <svg class="desk" width="22" height="22"><path d="M1 0h20v21H1z" fill="#1cabf2" /><path d="M1 0h20v2H1z" fill="#85d3f8" /><path d="M1 16h20v5H1z" fill="#128bd6" /><path d="M4 18h7v2H4z" fill="#333" /></svg>
      <svg class="ff" width="20" height="20"><path d="M1 1h18v18H1z" fill="#f5a52c" /><path d="M3 4q3-3 8-2l5 2q3 3 2 8-2 5-8 5-6-1-7-6z" fill="#2f78dc" /><path d="M3 3q3 3 6 2l2 2-4 1 3 3q3 1 4-2 0 6-6 6T2 9z" fill="#f9c432" /><path d="M10 2l4 2 2 5-3-2z" fill="#76b7ff" /></svg>
      <svg width="20" height="20"><rect x="1" y="1" width="18" height="18" fill="#333" stroke="#aaa" stroke-width="1.500" /><path d="M4 5l4 3-4 3M9 11.500h6" fill="none" stroke="#ddd" /></svg>
      <svg class="folder" width="20" height="20"><path d="M1 1h6l2 3h9v5H1z" fill="#aaa" /><path d="M1 7h6l3-3h9v15H1z" fill="#f7d11e" /></svg>
      <div class="task"><svg width="16" height="16"><path d="M0 0h16v16H0z" fill="#f2dfc4" /><path d="M1 7q2-2 4 0 2 2 5-2l4-3q2 5-1 8t-7 3-5-6z" fill="#6e675e" /><circle cx="4" cy="8" r="1.200" fill="#fff" /><circle cx="7.500" cy="8.500" r="1.200" fill="#fff" /><path d="M2 11l6 3" stroke="#222" /></svg><span>[Untitled]-1.0 (...</span></div>
      <div class="tray">
        <svg width="16" height="16"><circle cx="8" cy="8" r="8" fill="#b8b8b8" /><circle cx="8" cy="3.500" r="1.600" fill="#202020" /><path d="M2.500 6h11M8 6v4M8 9l-2.500 5M8 9l2.500 5" stroke="#202020" stroke-width="1.800" /></svg>
        <svg width="16" height="16"><path d="M1 2h14v12H1z" fill="none" stroke="#b8b8b8" stroke-width="1.700" /><path d="M3 11h2l1 2h4l1-2h2v3H3z" fill="#b8b8b8" /></svg>
        <svg width="16" height="16"><path d="M6 1l9-1v11M6 1v12M6 3.500l9-1" fill="none" stroke="#b8b8b8" stroke-width="1.800" /><ellipse cx="4" cy="13" rx="3.200" ry="2.500" fill="#b8b8b8" /><ellipse cx="12.500" cy="11" rx="3" ry="2.500" fill="#b8b8b8" /></svg>
        <span>06:44</span>
        <svg width="14" height="16"><path d="M4 3.500a6 6 0 1 0 6 0M7 1v7" fill="none" stroke="#aaa" stroke-width="1.700" /></svg>
      </div>
    </footer>
  </div>
</template>

<style>
html, body { margin: 0; overflow: hidden; }
</style>

<style scoped>
* { box-sizing: border-box; }
svg { display: block; flex: none; }
i { display: block; flex: none; }
.defs { position: absolute; }
.desktop { width: 1360px; height: 768px; display: flex; flex-direction: column; background: #efefef; color: #4a4a4a; font: 10.5px/14px "Noto Sans", sans-serif; overflow: hidden; white-space: nowrap; }
.titlebar { height: 31px; flex: none; background: #1f1f1f; border-top: 1px solid #141414; display: flex; justify-content: space-between; }
.title { width: 320px; margin-left: 461px; line-height: 29px; font-size: 12.500px; letter-spacing: .2px; font-weight: 700; color: #6d6d6d; }
.winbtns { display: flex; padding-right: 4px; margin-left: auto; }
.winbtns .close { background: #f00; margin-left: 2px; }
.menubar { height: 25px; flex: none; background: #2f2f2f; border-bottom: 1px solid #242424; display: flex; gap: 14px; padding-left: 7px; font-size: 12px; letter-spacing: -.005px; line-height: 25px; color: #dcdcdc; }
.work { height: 684px; flex: none; display: flex; }
.left { width: 138px; display: flex; flex-direction: column; position: relative; }
.tools { width: 132px; height: 432px; display: grid; grid-template-columns: repeat(3, 44px); grid-auto-rows: 36px; }
.tool { display: flex; align-items: center; justify-content: center; width: 42px; margin-left: 1px; border: 1px solid transparent; border-radius: 2px; }
.tool.on { background: #d2d2d2; border-color: #b2b2b2; }
.tabrow { display: flex; align-items: center; flex: none; border-bottom: 1px solid #dcdcdc; }
.tab.first { background: #fff; border: 1px solid #dcdcdc; border-bottom: 0; align-self: stretch; margin-bottom: -1px; display: flex; align-items: center; justify-content: center; }
.ltabs { height: 31px; width: 132px; }
.ltabs .tab { width: 38px; padding-top: 2px; }
.dockbtn { margin-left: auto; margin-right: 8px; }
.options { width: 132px; height: 142px; background: #fff; border: 1px solid #dcdcdc; border-width: 0 1px; display: flex; flex-direction: column; padding-left: 6px; }
.opt-title { font-weight: 700; line-height: 20px; height: 19px; font-size: 10.500px; color: #3a3a3a; }
.opt-body { display: flex; height: 77px; }
.opt-view { width: 106px; height: 77px; overflow: hidden; border-bottom: 1px solid #ccc; border-right: 1px solid #ddd; }
.optmode { display: flex; align-items: center; justify-content: space-between; height: 28px; }
.cut { width: 72px; height: 28px; border: 1px solid #ccc; border-right: 0; border-radius: 3px 0 0 3px; padding-left: 5px; line-height: 26px; background: #fcfefe; }
.fill { margin-top: 4px; height: 32px; background: #396fad; border: 1px solid #444; border-bottom-width: 2px; color: #eef3fa; display: flex; justify-content: space-between; align-items: center; padding: 0 0 0 1px; }
.brushrow { display: flex; margin-top: 4px; }
.brushrow i { width: 35px; height: 26px; border: 1px solid #ccc; border-radius: 3px; }
.brushrow span { margin-left: 3px; }
.vtrack { width: 12px; background: #fafafa; }
.vtrack i { width: 6px; height: 28px; border-radius: 3px; background: #b5b5b5; margin: 2px 0 0 3px; }
.htrack { height: 12px; width: 116px; background: #fafafa; padding: 4px 0 0 2px; }
.htrack i { width: 84px; height: 6px; border-radius: 3px; background: #b5b5b5; }
.opt-btns { display: flex; padding: 8px 0 0 6px; }
.reset { margin-left: 17px; }
.trash { margin-left: 11px; }
.undo { margin-left: 13px; }
.grip { position: absolute; left: 134px; top: 336px; display: flex; flex-direction: column; gap: 3px; }
.grip i, .hgrip i { width: 2px; height: 2px; background: #cfcfcf; }
.center { width: 1016px; border: 1px solid #dcdcdc; border-width: 0 1px; display: flex; flex-direction: column; }
.imgtabs { display: flex; height: 41px; flex: none; }
.imgtab { width: 93px; background: #fff; border: 1px solid #dcdcdc; border-width: 1px 1px 0 0; display: flex; align-items: center; justify-content: flex-end; padding: 0 17px 2px 0; }
.tabfill { flex: 1; border-bottom: 1px solid #dcdcdc; }
.editor { flex: 1; background: #fff; display: flex; flex-direction: column; }
.hrow { display: flex; height: 18px; }
.hruler { background: #efefef; margin-top: 1px; }
.hruler text, .vruler text { font-size: 10.500px; fill: #444; }
.crow { display: flex; height: 575px; padding-left: 4px; }
.vruler, .canvas { background: #efefef; }
.vscroll { width: 14px; margin-left: 1px; border-left: 1px solid #ddd; padding: 4px 0 0 4px; background: #fcfcfc; }
.vscroll i { width: 6px; height: 569px; background: #b5b5b5; border-radius: 3px; }
.srow { display: flex; height: 17px; align-items: center; padding-top: 1px; }
.hscroll { width: 970px; height: 13px; padding: 3px 0 0 3px; border-top: 1px solid #ddd; background: #fcfcfc; }
.hscroll i { width: 966px; height: 6px; background: #b5b5b5; border-radius: 3px; }
.nav { margin-left: 1px; }
.status { display: flex; height: 32px; align-items: center; padding-left: 10px; font-size: 11.800px; }
.coords { width: 73px; font-size: 12px; color: #ababab; }
.combo { height: 28px; border: 1px solid #ccc; border-radius: 3px; background: #fcfefe; display: flex; align-items: center; justify-content: space-between; padding: 0 7px 0 5px; }
.combo path, .steps path { fill: none; stroke: #555; stroke-width: 1.600; }
.steps path { stroke-width: 1.300; }
.status .combo { font-size: 10.500px; }
.px { width: 47px; }
.pct { width: 54px; margin: 0 1px 0 2px; justify-content: flex-end; padding-right: 5px; }
.arr { width: 18px; padding: 0 3px; margin-right: 3px; }
.hint { margin-left: 1px; }
.right { width: 206px; display: flex; position: relative; padding-left: 6px; }
.rg { left: 2px; }
.docks { width: 200px; display: flex; flex-direction: column; }
.rtabs { height: 31px; }
.rtabs .tab { width: 38px; }
.layers { height: 374px; background: #fff; border: 1px solid #dcdcdc; border-top: 0; padding: 3px 6px 0; }
.moderow { display: flex; align-items: center; justify-content: space-between; }
.moderow .combo { width: 152px; margin-right: 1px; }
.spin { height: 32px; border: 1px solid #444; margin-top: 2px; display: flex; }
.full { width: 167px; background: #396fad; border-right: 1px solid #000; color: #f2f6fb; display: flex; justify-content: space-between; align-items: center; padding: 0 1px; }
.steps { flex: 1; display: flex; flex-direction: column; justify-content: space-around; align-items: center; padding: 2px 0; }
.steps .dim path { stroke: #bbb; }
.lock { display: flex; height: 32px; align-items: center; padding-bottom: 1px; }
.lock svg:nth-of-type(1) { margin-left: 12px; }
.lock svg:nth-of-type(2) { margin-left: 14px; }
.layerlist { height: 244px; border: 1px solid #dcdcdc; }
.layer { height: 30px; background: #366391; display: flex; align-items: center; padding-left: 5px; color: #fff; }
.layer i { width: 36px; height: 24px; background: #fff; margin: 0 4px 0 45px; }
.layer b { font-size: 10.200px; }
.actions { display: flex; gap: 6px; padding: 7px 0 0 2px; }
.actions svg:last-child { margin-left: 3px; }
.hgrip { height: 7px; display: flex; gap: 3px; justify-content: center; align-items: center; }
.btabs { height: 29px; gap: 12px; padding-top: 1px; }
.btabs .tab { width: 32px; margin-right: -7px; margin-top: -1px; }
.btabs .dockbtn { margin-bottom: 1px; }
.brushes { height: 243px; background: #fff; border: 1px solid #dcdcdc; border-width: 0 1px; padding: 3px 6px 0; }
.filter { height: 26px; padding-right: 10px; }
.filter em { color: #aaa; }
.bname { font-style: italic; line-height: 18px; letter-spacing: .07px; }
.blist { height: 101px; border: 1px solid #dcdcdc; display: flex; }
.bt { border-left: 1px solid #ddd; }
.tags { height: 26px; margin-top: 2px; padding: 0 10px 0 7px; }
.part { flex: 1; position: relative; display: flex; justify-content: space-between; align-items: center; padding: 0 1px 0 1px; }
.part i { position: absolute; left: 0; top: 0; bottom: 0; width: 7px; background: #396fad; border-right: 1px solid #000; }
.part span { position: relative; }
.part u { color: #fff; text-decoration: none; }
.spacing .steps { flex: none; width: 18px; }
.bactions { display: flex; gap: 17px; padding: 7px 0 0 7px; }
.bactions svg:nth-child(4) { margin-left: -1px; }
.bactions svg:last-child { margin-left: 2px; }
.taskbar { height: 28px; flex: none; background: #1f1f1f; display: flex; align-items: center; padding-left: 5px; font: 700 13px/28px "DejaVu Sans", sans-serif; color: #b5b5b5; }
.menu { width: 50px; margin-left: 1px; padding-top: 2px; }
.desk { margin-right: 19px; }
.ff, .folder { margin-right: 6px; }
.ff + svg { margin-right: 6px; }
.task { width: 166px; height: 28px; margin-left: 13px; border-bottom: 2px solid #0078d7; display: flex; align-items: center; gap: 5px; padding-left: 3px; color: #f4f4f4; letter-spacing: -.1px; }
.tray { margin-left: auto; display: flex; align-items: center; gap: 8px; padding-right: 5px; }
.tray span { padding-top: 3px; }
</style>
